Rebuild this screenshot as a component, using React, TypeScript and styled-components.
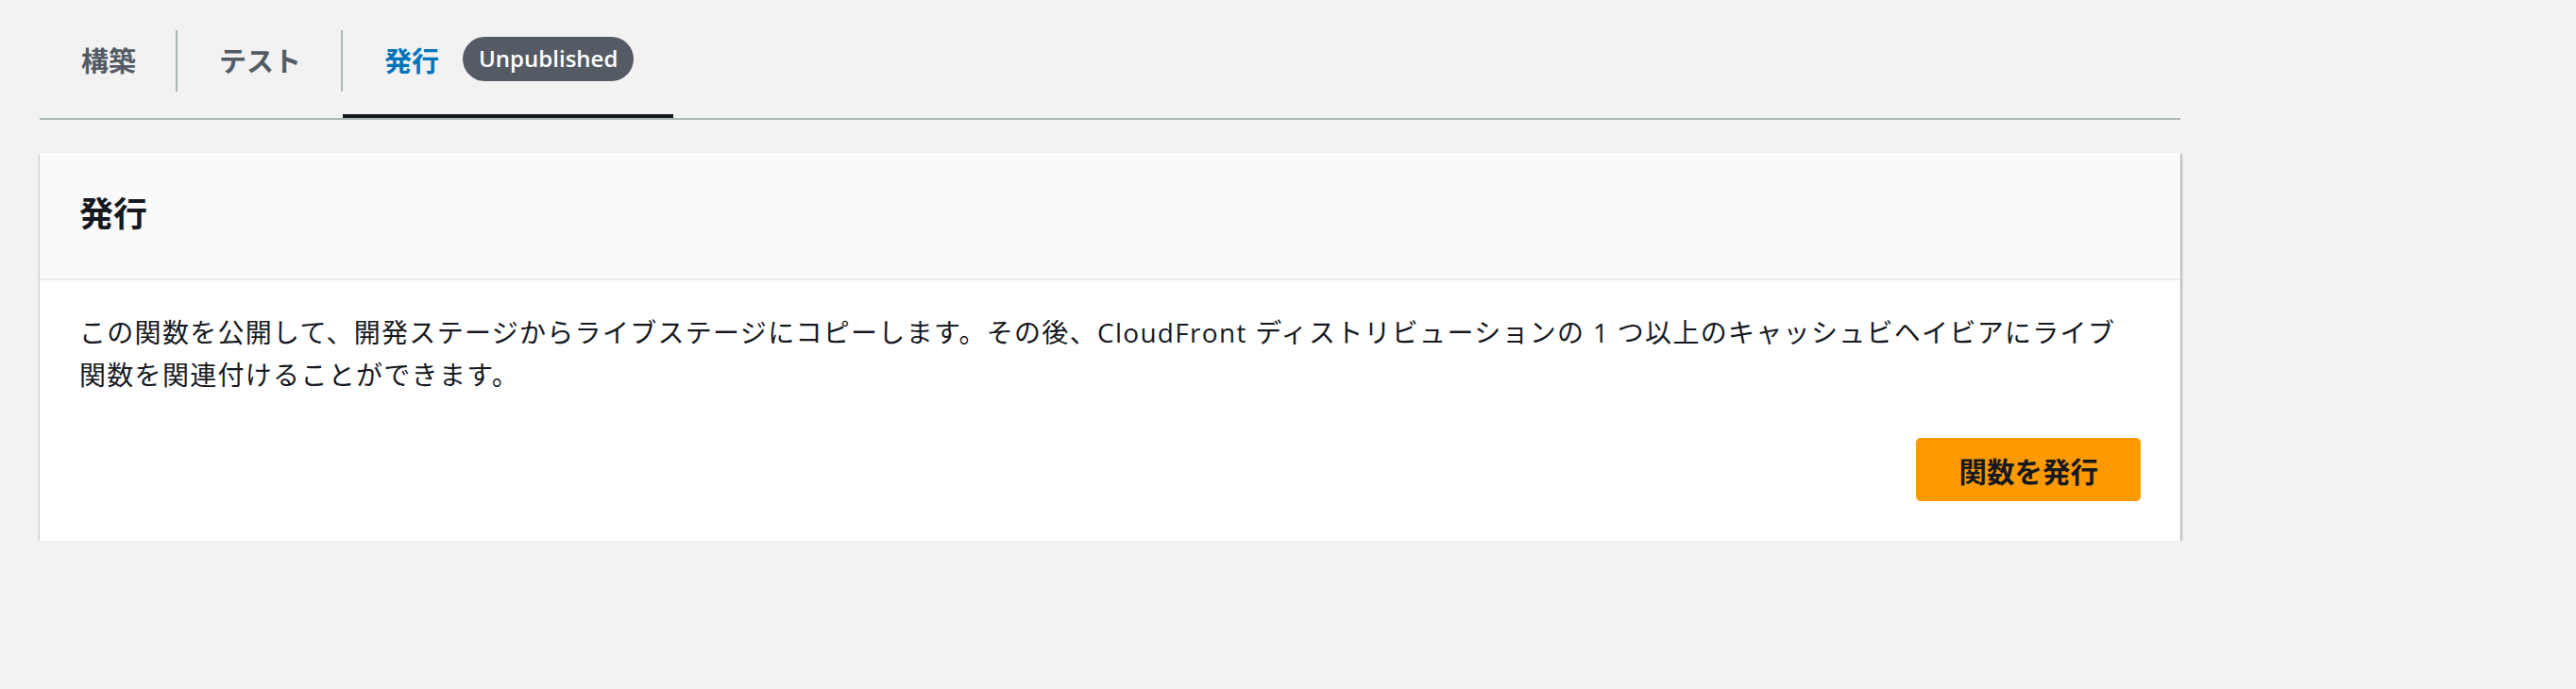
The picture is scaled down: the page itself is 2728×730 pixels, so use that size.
import React from "react";
import styled, { createGlobalStyle } from "styled-components";

const GlobalStyle = createGlobalStyle`
  html, body {
    margin: 0;
    padding: 0;
    background: #f2f2f2;
  }
  body {
    font-family: "Open Sans", "Noto Sans CJK JP", sans-serif;
    color: #16191f;
  }
`;

const Page = styled.div`
  width: 2267px;
  padding: 0 0 0 42px;
`;

const TabList = styled.div`
  display: flex;
  align-items: stretch;
  height: 127px;
  box-sizing: border-box;
  border-bottom: 2px solid #aab7b8;
`;

const Tab = styled.div<{ $active?: boolean }>`
  display: flex;
  align-items: center;
  gap: 25px;
  box-sizing: border-box;
  height: 125px;
  padding: 4px 42px 0 44px;
  border-bottom: 4px solid ${(p) => (p.$active ? "#16191f" : "transparent")};
  font-family: "Noto Sans CJK JP", sans-serif;
  font-size: 29px;
  font-weight: 700;
  color: ${(p) => (p.$active ? "#0073bb" : "#545b64")};
  white-space: nowrap;
`;

const Separator = styled.div`
  align-self: flex-start;
  margin-top: 32px;
  width: 2px;
  height: 65px;
  background: #aab7b8;
`;

const Badge = styled.span`
  display: inline-flex;
  align-items: center;
  height: 47px;
  padding: 0 17px 2px 17px;
  box-sizing: border-box;
  border-radius: 24px;
  background: #545b64;
  color: #ffffff;
  font-family: "Open Sans", sans-serif;
  font-size: 24px;
  font-weight: 600;
`;

const Card = styled.section`
  margin-top: 35px;
  background: #ffffff;
  box-shadow: 0 2px 1px 0 rgba(0, 28, 36, 0.4), 2px 1px 2px 0 rgba(0, 28, 36, 0.22),
    -1px 1px 2px 0 rgba(0, 28, 36, 0.15);
`;

const CardHeader = styled.header`
  display: flex;
  align-items: center;
  height: 135px;
  box-sizing: border-box;
  padding: 0 42px 10px 42px;
  background: #fafafa;
  border-bottom: 2px solid #eaeded;
`;

const Heading = styled.h2`
  margin: 0;
  font-family: "Noto Sans CJK JP", sans-serif;
  font-size: 36px;
  font-weight: 700;
  color: #16191f;
`;

const CardBody = styled.div`
  padding: 33px 42px 42px 42px;
`;

const Description = styled.p`
  margin: 0;
  font-size: 28px;
  line-height: 45px;
  letter-spacing: 1.3px;
  color: #16191f;
`;

const Actions = styled.div`
  display: flex;
  justify-content: flex-end;
  margin-top: 44px;
`;

const PrimaryButton = styled.button`
  height: 67px;
  padding: 0 45px;
  border: none;
  border-radius: 5px;
  background: #ff9900;
  color: #16191f;
  font-family: "Noto Sans CJK JP", sans-serif;
  font-size: 29.5px;
  font-weight: 700;
  cursor: pointer;
`;

export default function App() {
  return (
    <>
      <GlobalStyle />
      <Page>
        <TabList>
          <Tab>構築</Tab>
          <Separator />
          <Tab>テスト</Tab>
          <Separator />
          <Tab $active>
            発行
            <Badge>Unpublished</Badge>
          </Tab>
        </TabList>
        <Card>
          <CardHeader>
            <Heading>発行</Heading>
          </CardHeader>
          <CardBody>
            <Description>
              この関数を公開して、開発ステージからライブステージにコピーします。その後、CloudFront
              ディストリビューションの 1 つ以上のキャッシュビヘイビアにライブ関数を関連付けることができます。
            </Description>
            <Actions>
              <PrimaryButton>関数を発行</PrimaryButton>
            </Actions>
          </CardBody>
        </Card>
      </Page>
    </>
  );
}
